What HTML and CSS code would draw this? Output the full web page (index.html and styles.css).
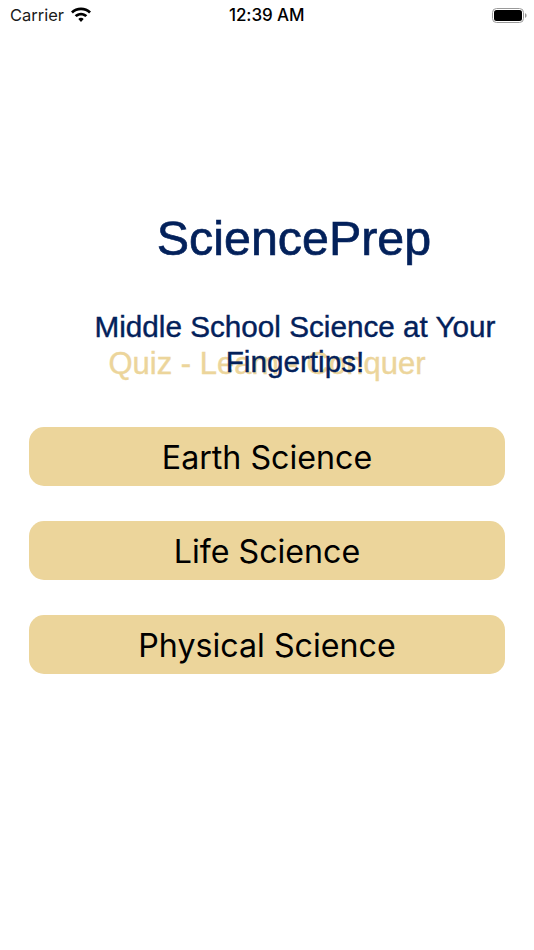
FILE: index.html
```html
<!DOCTYPE html>
<html lang="en">
<head>
<meta charset="utf-8">
<title>SciencePrep</title>
<link rel="stylesheet" href="styles.css">
</head>
<body>
<div class="screen">
  <header class="status">
    <div class="status-left">
      <span class="carrier">Carrier</span>
      <svg class="wifi" width="22" height="16" viewBox="0 0 22 16"><path fill="#000" d="M11 3.300c3.100 0 5.900 1.100 8.100 3.200l1.900-1.900C18.300 2 14.800.5 11 .5S3.700 2 1 4.600l1.900 1.900c2.200-2.100 5-3.200 8.100-3.200zM11 8.400c1.700 0 3.200.6 4.400 1.700l1.900-1.900C15.600 6.600 13.400 5.700 11 5.700s-4.600.9-6.300 2.500l1.900 1.900c1.200-1.100 2.700-1.700 4.400-1.700zM11 10.800c-1 0-2 .4-2.700 1.100L11 15l2.700-3.100c-.7-.7-1.700-1.100-2.700-1.100z"/></svg>
    </div>
    <span class="time">12:39 AM</span>
    <svg class="battery" width="36" height="17" viewBox="0 0 36 17"><rect x="0.500" y="1.500" width="31" height="14" rx="4" fill="none" stroke="#9a9a9a" stroke-width="1"/><rect x="2" y="3" width="28" height="11" rx="2.500" fill="#000"/><path fill="#9a9a9a" d="M33 6.300c1 .3 1.600 1.100 1.600 2.200S34 10.400 33 10.700z"/></svg>
  </header>
  <main class="content">
    <h1 class="title">SciencePrep</h1>
    <div class="subtitle-stack">
      <p class="tagline">Quiz - Learn - Conquer</p>
      <p class="subtitle">Middle School Science at Your Fingertips!</p>
    </div>
    <nav class="buttons">
      <a class="btn">Earth Science</a>
      <a class="btn">Life Science</a>
      <a class="btn">Physical Science</a>
    </nav>
  </main>
</div>
</body>
</html>
```
FILE: styles.css
```css
* { box-sizing: border-box; }
html, body { margin: 0; padding: 0; background: #fff; }
.screen { width: 534px; height: 950px; overflow: hidden; font-family: "Liberation Sans", Arial, sans-serif; display: flex; flex-direction: column; }
.status { height: 30px; display: flex; align-items: center; justify-content: space-between; padding: 0 6px 0 10px; position: relative; flex: none; }
.status-left { display: flex; align-items: center; gap: 6px; }
.carrier { font-size: 16.500px; color: #1a1a1a; font-family: Inter, "Liberation Sans", sans-serif; }
.time { position: absolute; left: 229px; top: 5px; font-size: 17px; font-weight: 500; font-family: Inter, "Liberation Sans", sans-serif; color: #000; letter-spacing: -0.1px; }
.wifi, .battery { display: block; }
.content { display: flex; flex-direction: column; flex: 1; }
.title { margin: 180px 0 0 54px; text-align: center; color: #03215b; font-size: 48.400px; line-height: 56px; font-weight: 400; -webkit-text-stroke: 0.7px #03215b; }
.subtitle-stack { position: relative; height: 108px; margin-top: 52px; }
.tagline { margin: 0; position: absolute; top: 29px; left: 0; right: 0; text-align: center; color: #ecd59b; font-size: 31px; line-height: 34px; -webkit-text-stroke: 0.4px #ecd59b; }
.subtitle { margin: 0; position: absolute; top: -9px; left: 80px; width: 430px; text-align: center; color: #03215b; font-size: 29.700px; line-height: 35px; -webkit-text-stroke: 0.4px #03215b; }
.buttons { display: flex; flex-direction: column; gap: 35px; padding: 0 29px; margin-top: 1px; }
.btn { height: 59px; padding-top: 1px; border-radius: 15px; background: #ecd59b; color: #000; display: flex; align-items: center; justify-content: center; font-size: 32.200px; font-family: Inter, "Liberation Sans", sans-serif; }
```
